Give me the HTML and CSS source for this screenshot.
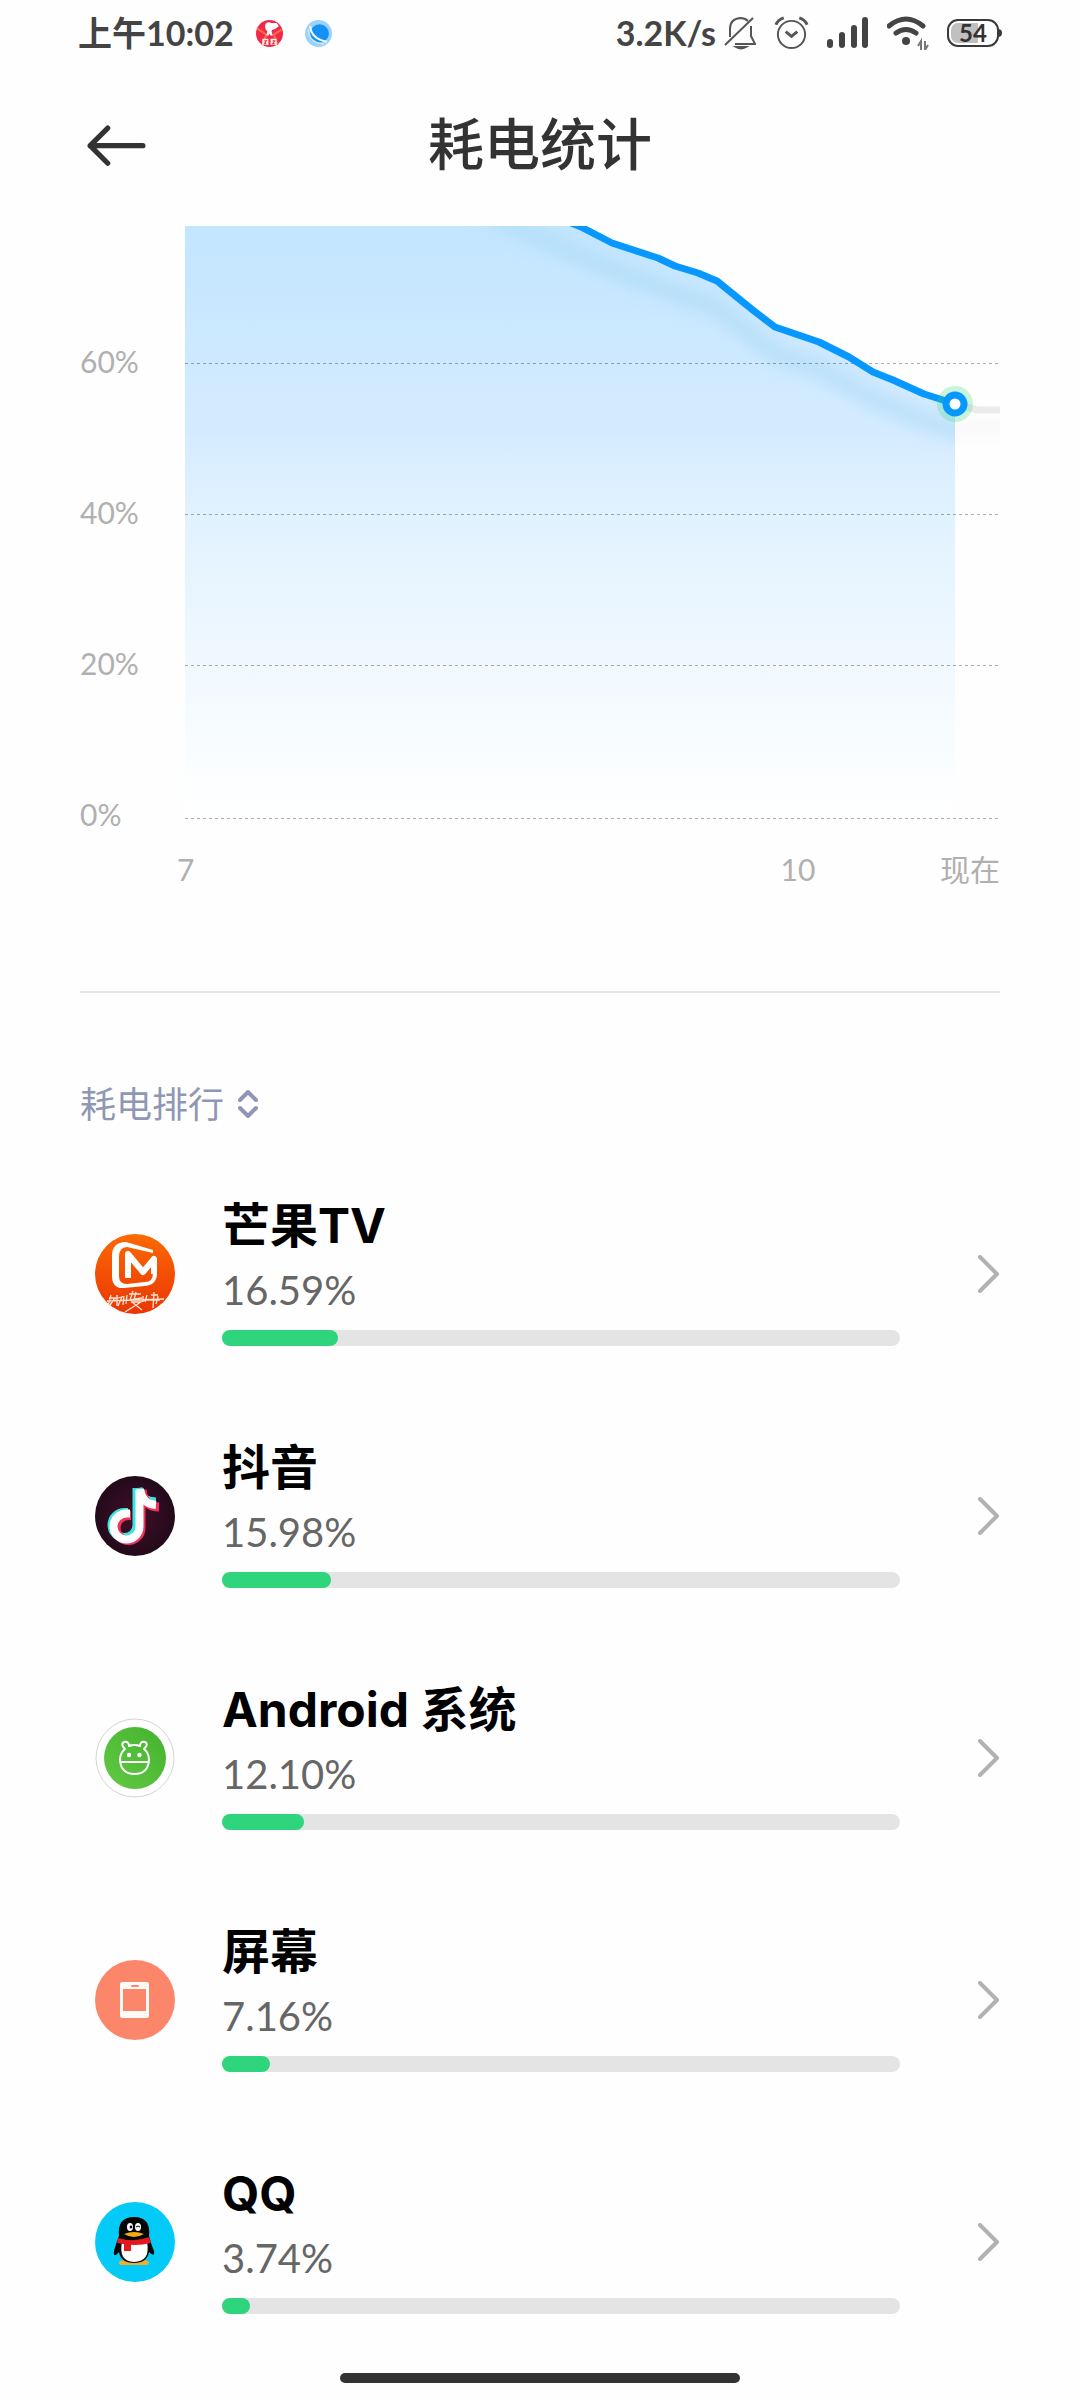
FILE: index.html
```html
<!DOCTYPE html>
<html lang="zh-CN">
<head>
  <meta charset="UTF-8" />
  <meta name="viewport" content="width=device-width, initial-scale=1.0">
  <title>耗电统计</title>
  <link rel="stylesheet" href="styles.css">
</head>
<body>

  <!-- Status bar -->
  <div class="statusbar">
    <div class="status-left">
      <span class="time">上午10:02</span>
      <svg class="notice" viewBox="0 0 26 26" aria-hidden="true">
        <circle cx="13" cy="13" r="13" fill="#f0284a"/>
        <path d="M1 8L10 14L6 24M25 9L17 14L21 24" fill="none" stroke="#ff6a4e" stroke-width="2"/>
        <path d="M9 4Q11 1 15 3L20 3L22 6L18 9Q15 9 15 11L16 15H14L13 13L12 15H10L11 11Q8 8 9 4Z" fill="#fff"/>
        <path d="M6 18h6v6H6zM14 18h6v6h-6z" fill="#fff0dc"/>
        <path d="M8 20h2l-2 3h2M16 20h2l-2 3h2" fill="none" stroke="#f0284a"/>
      </svg>
      <svg class="notice" viewBox="0 0 26 26" aria-hidden="true">
        <circle cx="13" cy="13" r="13" fill="#9bd2fb"/>
        <circle cx="14" cy="13" r="9" fill="#1590f5"/>
        <path d="M5 6Q6 18 21 21" fill="none" stroke="#fff" stroke-width="2"/>
        <path d="M3 9Q4 22 18 23" fill="none" stroke="#d3edff" stroke-width="1"/>
      </svg>
    </div>
    <div class="status-right">
      <span class="speed">3.2K/s</span>
      <svg class="bell" viewBox="0 0 32 34" fill="none" stroke="#555" stroke-width="2" aria-hidden="true">
        <path d="M1 29L29 2"/>
        <path d="M6 21V13Q6 3 16 2Q21 2 24 5M27 10V20L31 28H11"/>
        <path d="M12 31H22Q17 34 12 31Z" fill="#555"/>
      </svg>
      <svg class="alarm" viewBox="0 0 36 34" fill="none" stroke="#555" stroke-width="2" aria-hidden="true">
        <circle cx="18" cy="19" r="14"/>
        <path d="M12 16L18 21L24 16" stroke-width="3"/>
        <path d="M2 9Q4 4 10 2M34 9Q32 4 26 2" stroke-width="3"/>
      </svg>
      <svg class="signal" viewBox="0 0 42 32" fill="#444" aria-hidden="true">
        <rect x="0" y="22" width="6" height="9" rx="3"/>
        <rect x="12" y="15" width="6" height="16" rx="3"/>
        <rect x="24" y="8" width="6" height="23" rx="3"/>
        <rect x="35" y="0" width="6" height="31" rx="3"/>
      </svg>
      <svg class="wifi" viewBox="0 0 42 34" fill="none" stroke="#444" aria-hidden="true">
        <path d="M2 10Q19 -4 36 10" stroke-width="5" stroke-linecap="round"/>
        <path d="M9 17Q19 10 29 17" stroke-width="5" stroke-linecap="round"/>
        <circle cx="19" cy="25" r="4" fill="#444" stroke="none"/>
        <path d="M34 34V25L31 30M38 25V34L41 29" stroke="#777" stroke-width="2"/>
      </svg>
      <div class="battery">
        <span class="battery-level">54</span>
      </div>
    </div>
  </div>

  <!-- Header -->
  <header class="topbar">
    <button class="back" aria-label="返回">
      <svg viewBox="0 0 58 40" fill="none" stroke="#333" stroke-width="5" stroke-linecap="round" stroke-linejoin="round">
        <path d="M21 3L4 20L21 37M4 20H55"/>
      </svg>
    </button>
    <h1>耗电统计</h1>
  </header>

  <main>
    <!-- Battery chart -->
    <section class="chart">
      <div class="y-axis">
        <span>60%</span>
        <span>40%</span>
        <span>20%</span>
        <span>0%</span>
      </div>
      <svg class="plot" viewBox="0 0 815 608" role="img" aria-label="电量曲线">
        <defs>
          <linearGradient id="fill" x1="0" y1="0" x2="0" y2="592" gradientUnits="userSpaceOnUse">
            <stop offset="0" stop-color="#c2e6ff"/>
            <stop offset=".34" stop-color="#d4ebff"/>
            <stop offset=".46" stop-color="#dff1ff"/>
            <stop offset=".9" stop-color="#fafdff"/>
            <stop offset="1" stop-color="#fff"/>
          </linearGradient>
          <linearGradient id="haze" x1="0" y1="0" x2="0" y2="1">
            <stop offset="0" stop-color="#fefefe"/>
            <stop offset=".4" stop-color="#f9f9f9"/>
            <stop offset="1" stop-color="#fefefe"/>
          </linearGradient>
          <clipPath id="area">
            <path d="M0 0H394L427 17L473 32L490 40L513 47L532 55L569 85L590 101L634 116L664 131L688 146L708 154L739 168L770 178V592H0Z"/>
          </clipPath>
          <filter id="soft" x="-10%" y="-20%" width="120%" height="140%">
            <feGaussianBlur stdDeviation="7"/>
          </filter>
        </defs>
        <g clip-path="url(#area)">
          <rect width="770" height="592" fill="url(#fill)"/>
          <path d="M300 -14L360 14L427 44L490 67L532 82L590 128L634 143L688 173L739 195L790 210" fill="none" stroke="#a9daf5" stroke-opacity=".5" stroke-width="20" filter="url(#soft)"/>
        </g>
        <rect x="770" y="188" width="45" height="34" fill="url(#haze)"/>
        <path d="M0 137H815M0 288H815M0 439H815M0 592H815" stroke="#000" stroke-opacity=".32" stroke-dasharray="3 3" shape-rendering="crispEdges"/>
        <path d="M770 178L792 184H815" fill="none" stroke="#ebebeb" stroke-width="7"/>
        <path d="M384 -4L396 1L427 17L473 32L490 40L513 47L532 55L569 85L590 101L634 116L664 131L688 146L708 154L739 168L758 174L770 178" fill="none" stroke="#0698ff" stroke-width="7" stroke-linejoin="round"/>
        <circle cx="770" cy="178" r="18" fill="#2ed47a" fill-opacity=".25"/>
        <circle cx="770" cy="178" r="9" fill="#fff" stroke="#0698ff" stroke-width="7"/>
      </svg>
      <div class="x-axis">
        <span>7</span>
        <div class="x-end">
          <span>10</span>
          <span>现在</span>
        </div>
      </div>
    </section>

    <!-- Ranking -->
    <button class="sort">
      耗电排行
      <svg viewBox="0 0 20 30" fill="none" stroke="#8f97b5" stroke-width="4" stroke-linecap="round" stroke-linejoin="round">
        <path d="M2 11L10 3L18 11M2 19L10 27L18 19"/>
      </svg>
    </button>

    <div class="ranking">
      <a class="app" href="#">
        <svg class="app-icon" viewBox="0 0 80 80" aria-hidden="true">
          <defs>
            <linearGradient id="mango" x1="0" y1="0" x2="0" y2="1">
              <stop offset="0" stop-color="#fb6a02"/>
              <stop offset="1" stop-color="#ea3606"/>
            </linearGradient>
          </defs>
          <circle cx="40" cy="40" r="40" fill="url(#mango)"/>
          <path d="M58 16L31 8Q17 8 17 22V42Q17 55 29 54L50 52Q62 51 62 39V24L58 22V39Q58 48 50 48L32 50Q24 50 24 42V23Q24 13 32 13L58 19Z" fill="#fff"/>
          <path d="M33 44V20L48 38L59 25V40" fill="none" stroke="#fff" stroke-width="6" stroke-linejoin="round"/>
          <path d="M12 67L69 65M16 61L13 72M14 64H20L15 71M22 61V72M20 65L27 63L23 72M29 62L28 71M32 61L31 70M34 60H46M38 57L35 66L47 64M41 58L39 66M36 68H46L30 78M37 68L47 76M48 62V68M52 61L50 68M56 61H63M59 58L58 74M54 66H65M63 62L61 70" fill="none" stroke="#ffe6d8" stroke-width="1.3"/>
        </svg>
        <div class="app-info">
          <h2>芒果TV</h2>
          <p>16.59%</p>
          <div class="bar"><div class="bar-fill" style="width: 17.1%"></div></div>
        </div>
        <svg class="chevron" viewBox="0 0 22 38" aria-hidden="true"><path d="M2 2L19 19L2 36"/></svg>
      </a>

      <a class="app" href="#">
        <svg class="app-icon" viewBox="0 0 80 80" aria-hidden="true">
          <defs>
            <radialGradient id="night">
              <stop offset="0" stop-color="#420f25"/>
              <stop offset="1" stop-color="#230a1b"/>
            </radialGradient>
          </defs>
          <circle cx="40" cy="40" r="40" fill="url(#night)"/>
          <g fill="none" stroke-width="9">
            <path d="M42 12V49A12.500 12.500 0 1 1 29.500 36.500H33M43 12Q45 26 61 26" stroke="#3be4e3"/>
            <path d="M46 14V52A12.500 12.500 0 1 1 33.500 39.500H36M47 14Q49 31 64 31" stroke="#f0305b"/>
            <path d="M44.500 14V50.500A13 13 0 1 1 31.500 37.500H35M45 13Q47 28 61 29" stroke="#fff" stroke-width="8"/>
          </g>
        </svg>
        <div class="app-info">
          <h2>抖音</h2>
          <p>15.98%</p>
          <div class="bar"><div class="bar-fill" style="width: 16.1%"></div></div>
        </div>
        <svg class="chevron" viewBox="0 0 22 38" aria-hidden="true"><path d="M2 2L19 19L2 36"/></svg>
      </a>

      <a class="app" href="#">
        <svg class="app-icon" viewBox="0 0 80 80" aria-hidden="true">
          <defs>
            <linearGradient id="leaf" x1="0" y1="1" x2="1" y2="0">
              <stop offset="0" stop-color="#61c944"/>
              <stop offset="1" stop-color="#44b22d"/>
            </linearGradient>
          </defs>
          <circle cx="40" cy="40" r="39" fill="#fff" stroke="#d4d4d4"/>
          <circle cx="40" cy="40" r="31" fill="url(#leaf)"/>
          <path d="M30 31Q25 26 29 24Q34 23 34 28Q39 26 45 28Q45 23 50 24Q54 26 49 31Q54 35 54 42Q53 56 39.500 56Q26 56 25 42Q25 35 30 31ZM25 44H54" fill="none" stroke="#fff" stroke-width="2" stroke-linejoin="round"/>
          <circle cx="34" cy="37" r="2.200" fill="#fff"/>
          <circle cx="44.500" cy="37" r="2.200" fill="#fff"/>
        </svg>
        <div class="app-info">
          <h2>Android 系统</h2>
          <p>12.10%</p>
          <div class="bar"><div class="bar-fill" style="width: 12.1%"></div></div>
        </div>
        <svg class="chevron" viewBox="0 0 22 38" aria-hidden="true"><path d="M2 2L19 19L2 36"/></svg>
      </a>

      <a class="app" href="#">
        <svg class="app-icon" viewBox="0 0 80 80" aria-hidden="true">
          <circle cx="40" cy="40" r="40" fill="#fb8669"/>
          <rect x="25" y="22" width="29" height="36" rx="2" fill="#fffaf5"/>
          <rect x="28" y="29" width="23" height="22" fill="#fb8669"/>
          <rect x="36" y="25" width="8" height="2" rx="1" fill="#fb8669"/>
        </svg>
        <div class="app-info">
          <h2>屏幕</h2>
          <p>7.16%</p>
          <div class="bar"><div class="bar-fill" style="width: 7.1%"></div></div>
        </div>
        <svg class="chevron" viewBox="0 0 22 38" aria-hidden="true"><path d="M2 2L19 19L2 36"/></svg>
      </a>

      <a class="app" href="#">
        <svg class="app-icon" viewBox="0 0 80 80" aria-hidden="true">
          <circle cx="40" cy="40" r="40" fill="#03caf7"/>
          <path d="M24 60Q28 56 38 60H40Q50 56 54 60Q54 63 51 63H27Q23 63 24 60Z" fill="#eeb02c"/>
          <path d="M24 34Q22 15 39 15Q56 15 54 34Q56 42 59 49Q60 56 54 50Q52 61 39 61Q26 61 24 50Q18 57 19 49Q21 41 24 34Z" fill="#050505"/>
          <path d="M27 40H52Q56 59 39 60Q23 59 27 40Z" fill="#fff"/>
          <path d="M23 36Q39 41 54 35L56 41Q40 45 22 41Z" fill="#e4191d"/>
          <path d="M29 41L36 42V49H29Z" fill="#e4191d"/>
          <ellipse cx="35" cy="25" rx="3" ry="4" fill="#fff"/>
          <ellipse cx="43" cy="25" rx="3" ry="4" fill="#fff"/>
          <circle cx="36" cy="25" r="1.400"/>
          <path d="M41 25Q43 23 45 25" fill="none" stroke="#000"/>
          <path d="M29 32Q39 28 49 32Q39 38 29 32Z" fill="#f6ab16"/>
        </svg>
        <div class="app-info">
          <h2>QQ</h2>
          <p>3.74%</p>
          <div class="bar"><div class="bar-fill" style="width: 4.1%"></div></div>
        </div>
        <svg class="chevron" viewBox="0 0 22 38" aria-hidden="true"><path d="M2 2L19 19L2 36"/></svg>
      </a>
    </div>
  </main>

  <!-- Gesture bar -->
  <div class="home"></div>

</body>
</html>
```

FILE: styles.css
```css
* {
  box-sizing: border-box;
}

body {
  margin: 0;
  background-color: #fefefe;
  color: #333;
  font-family: Lato, "Noto Sans CJK SC", sans-serif;
}

h1, h2, p {
  margin: 0;
}

button {
  padding: 0;
  border: none;
  background: none;
  font-family: inherit;
  cursor: pointer;
}

svg {
  display: block;
  flex-shrink: 0;
}

.statusbar {
  display: flex;
  justify-content: space-between;
  align-items: center;
  height: 66px;
  padding: 0 78px;
  font-size: 34px;
  line-height: 40px;
  font-weight: bold;
  color: #444;
}

.status-left {
  display: flex;
  align-items: center;
  gap: 22px;
}

.status-right {
  display: flex;
  align-items: center;
  gap: 18px;
}

.speed {
  margin-right: -10px;
}

.notice {
  width: 27px;
}

.bell {
  width: 32px;
}

.alarm {
  width: 35px;
}

.signal {
  width: 42px;
}

.wifi {
  width: 42px;
}

.battery {
  position: relative;
  width: 52px;
  height: 28px;
  margin-right: 3px;
  padding: 2px;
  border: 2px solid #3a3a3a;
  border-radius: 11px;
}

.battery::after {
  content: "";
  position: absolute;
  top: 8px;
  right: -5px;
  width: 4px;
  height: 8px;
  border-radius: 0 4px 4px 0;
  background-color: #3a3a3a;
}

.battery-level {
  display: block;
  border-radius: 7px;
  background: linear-gradient(to right, #c0c0c0 62%, transparent 62%);
  color: #333;
  font-size: 24px;
  line-height: 20px;
  text-align: center;
}

.topbar {
  display: grid;
  grid-template-columns: 1fr auto 1fr;
  align-items: center;
  height: 160px;
  padding: 0 86px;
}

.back svg {
  width: 60px;
}

h1 {
  padding-bottom: 4px;
  font-size: 56px;
  line-height: 80px;
  font-weight: 500;
}

main {
  padding: 0 80px;
}

.chart {
  display: grid;
  grid-template-columns: 105px 1fr;
  padding-bottom: 102px;
  border-bottom: 2px solid #e5e5e5;
  color: #b0b0b0;
  font-size: 30px;
  line-height: 40px;
}

.y-axis {
  display: flex;
  flex-direction: column;
  justify-content: space-between;
  padding-top: 115px;
}

.plot {
  width: 100%;
}

.x-axis {
  grid-column: 1 / 3;
  display: grid;
  grid-template-columns: 11fr 4fr;
  margin-top: 15px;
  padding-left: 97px;
}

.x-end {
  display: flex;
  justify-content: space-between;
}

.sort {
  display: flex;
  align-items: center;
  gap: 14px;
  margin: 87px 0 25px;
  color: #8f97b5;
  font-size: 36px;
  line-height: 48px;
}

.sort svg {
  width: 20px;
}

.app {
  display: flex;
  align-items: center;
  padding: 41px 0 41px 15px;
  color: #666;
  text-decoration: none;
}

.app-icon {
  width: 80px;
  margin-right: 47px;
}

.app-info {
  flex: 1;
  padding-bottom: 8px;
}

.app h2 {
  color: #000;
  font-family: Inter, "Noto Sans CJK SC", sans-serif;
  font-size: 48px;
  line-height: 64px;
}

.app p {
  font-size: 40px;
  line-height: 64px;
}

.bar {
  height: 16px;
  margin-top: 8px;
  border-radius: 8px;
  background-color: #e4e4e4;
}

.bar-fill {
  height: 100%;
  border-radius: 8px;
  background-color: #2ed57d;
}

.chevron {
  width: 22px;
  margin-left: 78px;
  fill: none;
  stroke: #b2b2b2;
  stroke-width: 4;
  stroke-linecap: round;
  stroke-linejoin: round;
}

.home {
  width: 37%;
  height: 10px;
  margin: 10px auto 17px;
  border-radius: 5px;
  background-color: #333;
}
```
